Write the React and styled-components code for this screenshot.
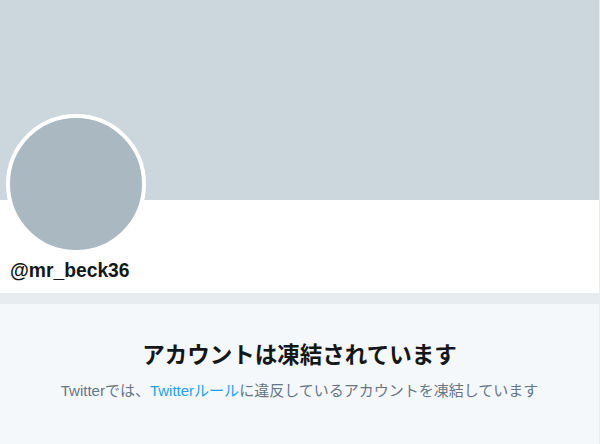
import React from 'react';
import styled, { createGlobalStyle } from 'styled-components';

const GlobalStyle = createGlobalStyle`
  html, body {
    margin: 0;
    padding: 0;
    background: #ffffff;
  }
  body {
    font-family: "Liberation Sans", "Noto Sans CJK JP", sans-serif;
    color: #14171a;
  }
`;

export default function App() {
  return (
    <React.Fragment>
      <GlobalStyle />
      <Page>
        <Banner />
        <ProfileInfo>
          <Avatar />
          <ScreenName>@mr_beck36</ScreenName>
        </ProfileInfo>
        <Divider />
        <SuspendedNotice>
          <NoticeTitle>アカウントは凍結されています</NoticeTitle>
          <NoticeText>
            Twitterでは、<RuleLink href="#">Twitterルール</RuleLink>に違反しているアカウントを凍結しています
          </NoticeText>
        </SuspendedNotice>
      </Page>
    </React.Fragment>
  );
}

const Page = styled.div`
  width: 600px;
  height: 444px;
  box-sizing: border-box;
  border-right: 1px solid #e6ecf0;
  display: flex;
  flex-direction: column;
  overflow: hidden;
`;

const Banner = styled.div`
  height: 200px;
  background: #ccd6dd;
  flex-shrink: 0;
`;

const ProfileInfo = styled.div`
  background: #ffffff;
  padding: 0 10px 10px 10px;
  display: flex;
  flex-direction: column;
  flex-shrink: 0;
`;

const Avatar = styled.div`
  width: 132px;
  height: 132px;
  margin: -86px 0 0 -4px;
  border: 4px solid #ffffff;
  border-radius: 50%;
  background: #aab8c2;
`;

const ScreenName = styled.div`
  margin-top: 5px;
  font-size: 19.3px;
  line-height: 24px;
  font-weight: bold;
  color: #14171a;
`;

const Divider = styled.div`
  height: 11px;
  background: #e6ecf0;
  flex-shrink: 0;
`;

const SuspendedNotice = styled.div`
  flex: 1;
  background: #f5f8fa;
  padding-top: 37px;
  display: flex;
  flex-direction: column;
  align-items: center;
  text-align: center;
`;

const NoticeTitle = styled.h1`
  margin: 0;
  font-size: 22.5px;
  line-height: 30px;
  font-weight: bold;
  color: #14171a;
`;

const NoticeText = styled.p`
  margin: 10px 0 0 0;
  font-size: 15px;
  line-height: 20px;
  color: #657786;
`;

const RuleLink = styled.a`
  color: #1da1f2;
  text-decoration: none;
`;
